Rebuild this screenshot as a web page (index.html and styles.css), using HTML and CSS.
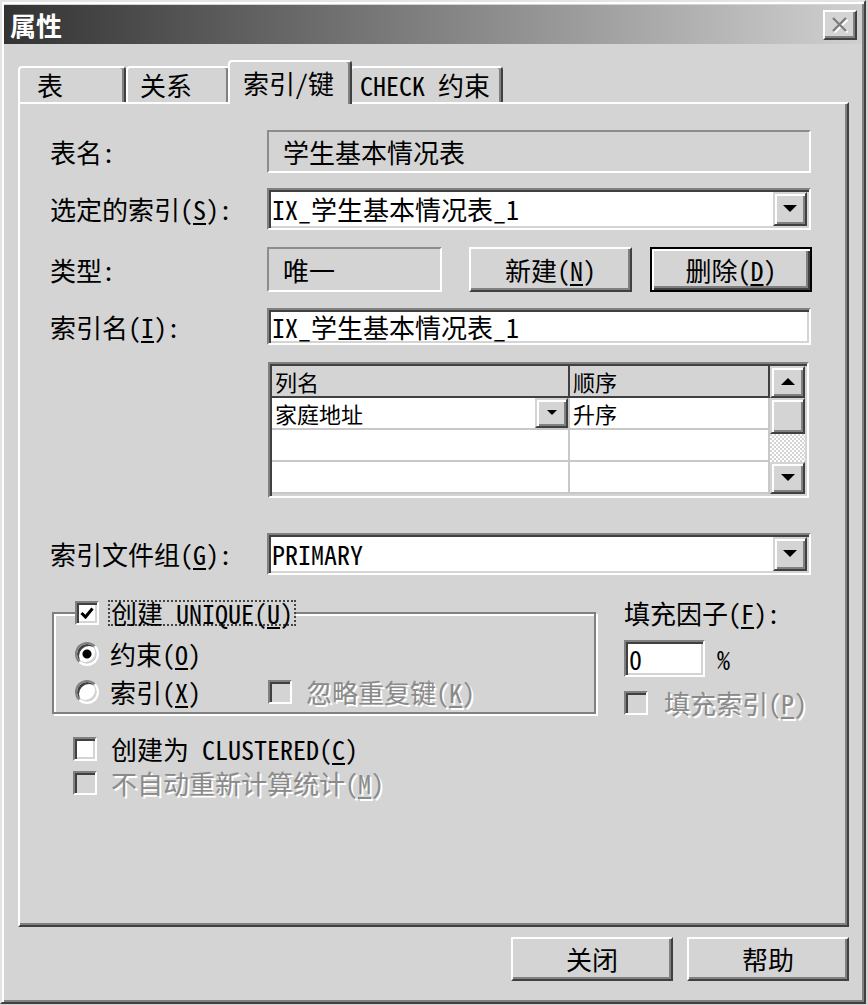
FILE: index.html
```html
<!DOCTYPE html>
<html lang="zh-CN">
<head>
    <meta charset="UTF-8">
    <title>属性</title>
    <link rel="stylesheet" href="styles.css">
</head>
<body>

    <div class="dialog">

        <!-- Title bar -->
        <div class="title-bar">
            <span class="title">属性</span>
            <button class="close-btn">
                <svg width="20" height="18" viewBox="0 0 20 18">
                    <path d="M3 2 L16 15 M16 2 L3 15" stroke="#fff" stroke-width="2.4" transform="translate(1.5 1.5)"/>
                    <path d="M3 2 L16 15 M16 2 L3 15" stroke="#7c7c7c" stroke-width="2.4"/>
                </svg>
            </button>
        </div>

        <!-- Tabs -->
        <div class="tabs">
            <div class="tab tab-table">表</div>
            <div class="tab tab-rel">关系</div>
            <div class="tab tab-index active">索引/键</div>
            <div class="tab tab-check">CHECK 约束</div>
        </div>

        <div class="panel">
            <div class="row row-name">
                <span class="label">表名:</span>
                <div class="field static wide">学生基本情况表</div>
            </div>

            <div class="row row-select">
                <span class="label">选定的索引(<u>S</u>):</span>
                <div class="combo wide">
                    <span class="combo-text">IX_学生基本情况表_1</span>
                    <span class="drop-btn"><svg width="14" height="8" viewBox="0 0 14 8"><polygon points="0,0 14,0 7,7"/></svg></span>
                </div>
            </div>

            <div class="row row-type">
                <span class="label">类型:</span>
                <div class="field static short">唯一</div>
                <button class="btn btn-new">新建(<u>N</u>)</button>
                <button class="btn btn-delete">删除(<u>D</u>)</button>
            </div>

            <div class="row row-iname">
                <span class="label">索引名(<u>I</u>):</span>
                <div class="field edit wide">IX_学生基本情况表_1</div>
            </div>

            <!-- Column grid -->
            <div class="grid">
                <div class="grid-cells">
                    <div class="cell head">列名</div>
                    <div class="cell head">顺序</div>
                    <div class="cell">家庭地址<span class="cell-drop"><svg width="10" height="6" viewBox="0 0 10 6"><polygon points="0,0 10,0 5,5"/></svg></span></div>
                    <div class="cell">升序</div>
                    <div class="cell"></div>
                    <div class="cell"></div>
                    <div class="cell"></div>
                    <div class="cell"></div>
                </div>
                <div class="scrollbar">
                    <div class="sb-btn"><svg width="14" height="8" viewBox="0 0 14 8"><polygon points="0,7 14,7 7,0"/></svg></div>
                    <div class="sb-thumb"></div>
                    <div class="sb-track"></div>
                    <div class="sb-btn"><svg width="14" height="8" viewBox="0 0 14 8"><polygon points="0,0 14,0 7,7"/></svg></div>
                </div>
            </div>

            <div class="row row-group">
                <span class="label">索引文件组(<u>G</u>):</span>
                <div class="combo wide">
                    <span class="combo-text">PRIMARY</span>
                    <span class="drop-btn"><svg width="14" height="8" viewBox="0 0 14 8"><polygon points="0,0 14,0 7,7"/></svg></span>
                </div>
            </div>

            <div class="lower">
                <fieldset class="groupbox">
                    <legend class="group-legend">
                        <span class="check"><svg width="16" height="16" viewBox="0 0 16 16"><polyline points="2.5,8 6.5,12 13.5,3.5" fill="none" stroke="#000" stroke-width="3"/></svg></span>
                        <span class="focus"><span>创建 UNIQUE(<u>U</u>)</span></span>
                    </legend>
                    <div class="option-row">
                        <label class="option radio-option"><span class="radio checked"></span><span>约束(<u>O</u>)</span></label>
                    </div>
                    <div class="option-row">
                        <label class="option radio-option option-fixed"><span class="radio"></span><span>索引(<u>X</u>)</span></label>
                        <label class="option disabled"><span class="check"></span><span>忽略重复键(<u>K</u>)</span></label>
                    </div>
                </fieldset>

                <div class="fill">
                    <div class="fill-label"><span>填充因子(<u>F</u>):</span></div>
                    <div class="fill-input">
                        <div class="field edit pct">0</div>
                        <span class="pct-sign">%</span>
                    </div>
                    <label class="option disabled fill-pad"><span class="check"></span><span>填充索引(<u>P</u>)</span></label>
                </div>
            </div>

            <div class="checks">
                <label class="option"><span class="check"></span><span>创建为 CLUSTERED(<u>C</u>)</span></label>
                <label class="option disabled"><span class="check"></span><span>不自动重新计算统计(<u>M</u>)</span></label>
            </div>
        </div>

        <!-- Dialog buttons -->
        <div class="footer">
            <button class="btn btn-foot">关闭</button>
            <button class="btn btn-foot">帮助</button>
        </div>
    </div>

</body>
</html>
```

FILE: styles.css
```css
/* Global */
body {
    margin: 0;
    background: #d4d4d4;
    font-family: "Noto Sans Mono CJK SC", "Noto Sans CJK SC", monospace;
    font-size: 26px;
    color: #000;
}

u {
    text-decoration-thickness: 2px;
    text-underline-offset: 3px;
}

button {
    font: inherit;
    color: inherit;
    padding: 0;
}

/* Window frame */
.dialog {
    width: 866px;
    height: 1004px;
    box-sizing: border-box;
    border: 2px solid;
    border-color: #e4e4e4 #404040 #404040 #e4e4e4;
    box-shadow: inset 2px 2px #fff, inset -2px -2px #808080;
    padding: 3px 2px 0 2px;
    background: #d4d4d4;
}

.title-bar {
    height: 39px;
    display: flex;
    align-items: center;
    justify-content: space-between;
    padding: 0 5px 0 6px;
    background: linear-gradient(to right, #333, #d0d0d0);
}

.title {
    color: #fff;
    font-weight: bold;
    line-height: 1;
}

.close-btn {
    width: 34px;
    height: 30px;
    box-sizing: border-box;
    display: flex;
    align-items: center;
    justify-content: center;
    background: #d4d4d4;
    border: 2px solid;
    border-color: #fff #404040 #404040 #fff;
    box-shadow: inset -2px -2px #808080;
}

/* Tabs */
.tabs {
    display: flex;
    align-items: flex-end;
    height: 42px;
    margin: 16px 0 0 14px;
}

.tab {
    box-sizing: border-box;
    height: 36px;
    display: flex;
    align-items: center;
    line-height: 1;
    white-space: nowrap;
    border: 2px solid;
    border-bottom: 0;
    border-color: #fff #404040 transparent #fff;
    border-radius: 4px 4px 0 0;
    box-shadow: inset -2px 0 #808080;
    background: #d4d4d4;
}

.tab-table { width: 108px; padding-left: 17px; }
.tab-rel { width: 104px; padding-left: 12px; }
.tab-check { width: 153px; padding-left: 8px; }

.tab.active {
    width: 124px;
    height: 44px;
    padding-left: 13px;
    margin: 0 -2px -2px;
    position: relative;
    z-index: 1;
}

/* Panel */
.panel {
    width: 831px;
    height: 825px;
    margin-left: 14px;
    box-sizing: border-box;
    border: 2px solid;
    border-color: #fff #404040 #404040 #fff;
    box-shadow: inset -2px -2px #808080;
    padding: 26px 0 0 30px;
}

.row {
    display: flex;
    align-items: center;
}

.label {
    width: 217px;
    flex: none;
    line-height: 1;
    white-space: nowrap;
}

.row-name { height: 43px; }
.row-select { height: 42px; margin-top: 15px; }
.row-type { height: 45px; margin-top: 17px; }
.row-iname { height: 37px; margin-top: 16px; }
.row-group { height: 42px; margin-top: 35px; }

.wide { width: 544px; }
.short { width: 175px; }

.field {
    box-sizing: border-box;
    align-self: stretch;
    display: flex;
    align-items: center;
    line-height: 1;
    white-space: nowrap;
}

.static {
    border: 2px solid;
    border-color: #8c8c8c #fff #fff #8c8c8c;
    padding-left: 14px;
}

.edit,
.combo {
    background: #fff;
    border: 2px solid;
    border-color: #808080 #fff #fff #808080;
    box-shadow: inset 2px 2px #404040, inset -2px -2px #d4d4d4;
}

.edit { padding-left: 3px; }

.combo {
    box-sizing: border-box;
    align-self: stretch;
    display: flex;
    align-items: center;
    padding: 2px;
    line-height: 1;
}

.combo-text { padding-left: 1px; }

.drop-btn,
.sb-btn,
.sb-thumb,
.cell-drop {
    box-sizing: border-box;
    display: flex;
    align-items: center;
    justify-content: center;
    background: #d4d4d4;
    border: 2px solid;
    border-color: #d4d4d4 #404040 #404040 #d4d4d4;
    box-shadow: inset 2px 2px #fff, inset -2px -2px #808080;
}

.drop-btn {
    width: 34px;
    align-self: stretch;
    margin-left: auto;
}

/* Push buttons */
.btn {
    box-sizing: border-box;
    width: 163px;
    height: 45px;
    background: #d4d4d4;
    border: 2px solid;
    border-color: #fff #404040 #404040 #fff;
    box-shadow: inset -2px -2px #808080;
    line-height: 1;
}

.btn-new { margin-left: 27px; }

.btn-delete {
    width: 162px;
    margin-left: 18px;
    border-color: #000;
    box-shadow: inset 2px 2px #fff, inset -2px -2px #404040, inset -4px -4px #808080;
}

/* Column grid */
.grid {
    width: 541px;
    height: 136px;
    margin: 17px 0 0 218px;
    box-sizing: border-box;
    display: flex;
    padding: 2px;
    background: #fff;
    border: 2px solid;
    border-color: #808080 #fff #fff #808080;
    box-shadow: inset 2px 2px #404040, inset -2px -2px #d4d4d4;
}

.grid-cells {
    flex: 1;
    display: grid;
    grid-template-columns: 298px 1fr;
    grid-template-rows: repeat(4, 1fr);
    font-size: 22px;
}

.cell {
    display: flex;
    align-items: center;
    padding-left: 3px;
    line-height: 1;
    border-right: 2px solid #c8c8c8;
    border-bottom: 2px solid #c8c8c8;
}

.cell.head {
    background: #d4d4d4;
    border-color: #404040;
}

.cell-drop {
    width: 33px;
    align-self: stretch;
    margin-left: auto;
}

.scrollbar {
    width: 35px;
    display: flex;
    flex-direction: column;
}

.sb-btn { height: 32px; }
.sb-thumb { height: 36px; }

.sb-track {
    flex: 1;
    background: repeating-conic-gradient(#fff 0 25%, #d4d4d4 0 50%) 0 0 / 4px 4px;
}

/* Unique group and fill factor */
.lower {
    display: flex;
    align-items: flex-start;
    margin-top: 25px;
}

.groupbox {
    width: 544px;
    box-sizing: border-box;
    margin: 0 0 0 2px;
    padding: 15px 0 7px 21px;
    border: 2px solid #808080;
    box-shadow: inset 2px 2px #fff, 2px 2px #fff;
    min-inline-size: auto;
}

.group-legend {
    display: flex;
    align-items: center;
    gap: 9px;
    height: 26px;
    padding: 0;
    background: #d4d4d4;
}

.focus {
    display: flex;
    align-items: center;
    height: 26px;
    box-sizing: border-box;
    padding: 0 1px;
    border: 2px dotted #444;
    line-height: 1;
    white-space: nowrap;
}

.option-row {
    display: flex;
    align-items: center;
    height: 26px;
}

.option-row + .option-row { margin-top: 12px; }

.option {
    display: flex;
    align-items: center;
    gap: 14px;
    height: 26px;
    line-height: 1;
    white-space: nowrap;
}

.radio-option { gap: 11px; }
.option-fixed { width: 193px; }

.check,
.radio {
    width: 24px;
    height: 24px;
    flex: none;
    box-sizing: border-box;
    display: flex;
    align-items: center;
    justify-content: center;
    background: #fff;
    border: 2px solid;
    border-color: #808080 #fff #fff #808080;
    box-shadow: inset 2px 2px #404040, inset -2px -2px #d4d4d4;
}

.radio { border-radius: 50%; }

.radio.checked {
    background: radial-gradient(circle, #000 0 4px, #fff 5px);
}

.disabled {
    color: #8a8a8a;
    text-shadow: 2px 2px 0 #fff;
}

.disabled .check { background: #d4d4d4; }

.fill { margin-left: 28px; }

.fill-label {
    height: 26px;
    display: flex;
    align-items: center;
    line-height: 1;
    white-space: nowrap;
}

.fill-input {
    display: flex;
    align-items: center;
    height: 37px;
    margin-top: 14px;
}

.pct { width: 81px; }
.pct-sign { margin-left: 12px; line-height: 1; }

.fill-pad { margin-top: 13px; gap: 16px; }

.checks {
    display: flex;
    flex-direction: column;
    gap: 8px;
    margin: 20px 0 0 23px;
}

/* Footer */
.footer {
    width: 831px;
    display: flex;
    justify-content: flex-end;
    gap: 14px;
    margin: 10px 0 0 14px;
}

.btn-foot {
    width: 162px;
    height: 44px;
}
```
